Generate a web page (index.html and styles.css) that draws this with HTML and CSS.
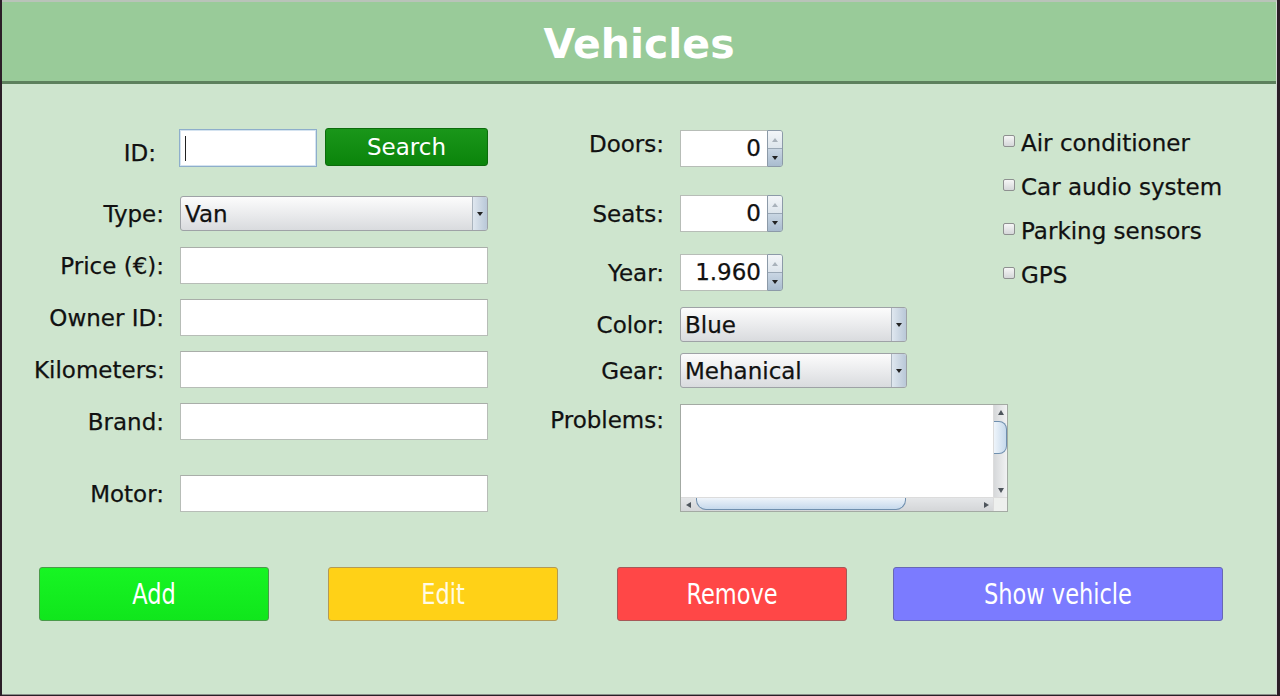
FILE: index.html
```html
<!DOCTYPE html>
<html lang="en">
<head>
<meta charset="utf-8">
<title>Vehicles</title>
<link rel="stylesheet" href="styles.css">
</head>
<body>
<div class="window">
  <header class="titlebar"><h1>Vehicles</h1></header>
  <main class="content">
    <div class="form">
      <div class="col-left">
        <div class="row row-id">
          <span class="lbl lbl-id">ID:</span>
          <div class="id-field">
            <div class="input input-focus"><span class="caret"></span></div>
            <button class="search">Search</button>
          </div>
        </div>
        <div class="row row-type">
          <span class="lbl">Type:</span>
          <div class="combo"><span class="combo-text">Van</span><span class="combo-btn"><i class="tri-down"></i></span></div>
        </div>
        <div class="row row-gap16">
          <span class="lbl">Price (€):</span>
          <div class="input"></div>
        </div>
        <div class="row row-gap15">
          <span class="lbl">Owner ID:</span>
          <div class="input"></div>
        </div>
        <div class="row row-gap15">
          <span class="lbl">Kilometers:</span>
          <div class="input"></div>
        </div>
        <div class="row row-gap15">
          <span class="lbl">Brand:</span>
          <div class="input"></div>
        </div>
        <div class="row row-motor">
          <span class="lbl">Motor:</span>
          <div class="input"></div>
        </div>
      </div>

      <div class="col-mid">
        <div class="mrow mrow-doors">
          <span class="lbl lbl-doors">Doors:</span>
          <div class="spinner"><span class="spin-val">0</span><span class="spin-btns"><span class="spin-up"><i class="tri-up-light"></i></span><span class="spin-down"><i class="tri-down"></i></span></span></div>
        </div>
        <div class="mrow mrow-seats">
          <span class="lbl">Seats:</span>
          <div class="spinner"><span class="spin-val">0</span><span class="spin-btns"><span class="spin-up"><i class="tri-up-light"></i></span><span class="spin-down"><i class="tri-down"></i></span></span></div>
        </div>
        <div class="mrow mrow-year">
          <span class="lbl">Year:</span>
          <div class="spinner"><span class="spin-val">1.960</span><span class="spin-btns"><span class="spin-up"><i class="tri-up-light"></i></span><span class="spin-down"><i class="tri-down"></i></span></span></div>
        </div>
        <div class="mrow mrow-color">
          <span class="lbl">Color:</span>
          <div class="combo combo-mid"><span class="combo-text">Blue</span><span class="combo-btn"><i class="tri-down"></i></span></div>
        </div>
        <div class="mrow mrow-gear">
          <span class="lbl">Gear:</span>
          <div class="combo combo-mid"><span class="combo-text">Mehanical</span><span class="combo-btn"><i class="tri-down"></i></span></div>
        </div>
        <div class="mrow mrow-problems">
          <span class="lbl lbl-problems">Problems:</span>
          <div class="textbox">
            <div class="ta-area"></div>
            <div class="vscroll">
              <span class="sb-arrow"><i class="tri-up"></i></span>
              <span class="vtrack"><span class="vthumb"></span></span>
              <span class="sb-arrow"><i class="tri-down-s"></i></span>
            </div>
            <div class="hscroll">
              <span class="sb-arrow sb-arrow-h"><i class="tri-left"></i></span>
              <span class="htrack"><span class="hthumb"></span></span>
              <span class="sb-arrow sb-arrow-h"><i class="tri-right"></i></span>
            </div>
            <div class="corner"></div>
          </div>
        </div>
      </div>

      <div class="col-right">
        <label class="check"><span class="box"></span><span class="check-text">Air conditioner</span></label>
        <label class="check"><span class="box"></span><span class="check-text">Car audio system</span></label>
        <label class="check"><span class="box"></span><span class="check-text">Parking sensors</span></label>
        <label class="check"><span class="box"></span><span class="check-text">GPS</span></label>
      </div>
    </div>

    <div class="actions">
      <button class="act act-add"><span class="act-label">Add</span></button>
      <button class="act act-edit"><span class="act-label">Edit</span></button>
      <button class="act act-remove"><span class="act-label">Remove</span></button>
      <button class="act act-show"><span class="act-label">Show vehicle</span></button>
    </div>
  </main>
</div>
</body>
</html>
```
FILE: styles.css
```css
* { box-sizing: border-box; }
html, body { margin: 0; height: 100%; }
body {
  background: #2b1e27;
  font-family: "DejaVu Sans", "Noto Sans", sans-serif;
  overflow: hidden;
}
.window {
  margin-left: 2px;
  width: 1275px;
  height: 695px;
  background: #cee5ce;
  border-top: 2px solid #b9c3b9;
  border-right: 1px solid #d3dad3;
  border-bottom: 1px solid #8a8f8a;
  display: flex;
  flex-direction: column;
}
.titlebar {
  height: 82px;
  background: #99cb99;
  border-bottom: 3px solid #5d805d;
  display: flex;
  align-items: center;
  justify-content: center;
  padding-top: 5px;
}
.titlebar h1 {
  margin: 0;
  font-family: "DejaVu Sans", sans-serif;
  font-weight: bold;
  font-size: 41px;
  color: #ffffff;
}
.content { flex: 1; }
.form { display: flex; }

.lbl {
  text-align: right;
  font-size: 23px;
  color: #111111;
  white-space: nowrap;
  -webkit-text-stroke: 0.25px #111111;
}

/* left column */
.col-left { margin-left: 32px; padding-top: 45px; width: 454px; }
.row {
  display: grid;
  grid-template-columns: 130px 308px;
  column-gap: 16px;
  align-items: center;
}
.row-type { margin-top: 29px; }
.row-gap16 { margin-top: 16px; }
.row-gap15 { margin-top: 15px; }
.row-motor { margin-top: 35px; }
.lbl-id { padding-right: 8px; padding-top: 10px; }

.input {
  height: 37px;
  background: #ffffff;
  border: 1px solid #b7bdb7;
  border-top-color: #a9aea9;
}
.input-focus {
  width: 138px;
  height: 38px;
  margin-left: -1px;
  border: 1px solid #8eaecb;
  box-shadow: inset 0 0 0 1px #d4e3f0;
  position: relative;
}
.caret {
  position: absolute;
  left: 5px;
  top: 6px;
  width: 1px;
  height: 25px;
  background: #222;
}
.id-field { display: flex; align-items: center; gap: 8px; }
.search {
  width: 163px;
  height: 38px;
  margin-top: -2px;
  border: 1px solid #0c6c0c;
  border-radius: 3px;
  background: linear-gradient(#1a961a, #0b840b);
  color: #ffffff;
  font-family: "DejaVu Sans", sans-serif;
  font-size: 23px;
  padding: 0;
}

.combo {
  height: 35px;
  border: 1px solid #9ea2a6;
  border-radius: 3px;
  background: linear-gradient(#fcfcfc, #e9eaec 55%, #d9dbde);
  display: flex;
  align-items: center;
  overflow: hidden;
}
.combo-mid { width: 227px; }
.combo-text {
  flex: 1;
  padding-left: 4px;
  font-size: 23px;
  color: #111;
  -webkit-text-stroke: 0.25px #111111;
}
.combo-btn {
  width: 15px;
  align-self: stretch;
  border-left: 1px solid #aab4be;
  background: linear-gradient(90deg, #dfe7ef, #b9c8d8);
  display: flex;
  align-items: center;
  justify-content: center;
}
.tri-down {
  width: 0; height: 0;
  border-left: 3px solid transparent;
  border-right: 3px solid transparent;
  border-top: 4px solid #222;
}
.tri-up-light {
  width: 0; height: 0;
  border-left: 3px solid transparent;
  border-right: 3px solid transparent;
  border-bottom: 4px solid #a9b2bb;
}

/* middle column */
.col-mid { margin-left: 52px; padding-top: 46px; width: 463px; }
.mrow {
  display: grid;
  grid-template-columns: 124px 323px;
  column-gap: 16px;
  align-items: center;
}
.lbl-doors { margin-top: -10px; }
.mrow-seats { margin-top: 28px; }
.mrow-year { margin-top: 22px; }
.mrow-color { margin-top: 16px; }
.mrow-gear { margin-top: 11px; }
.mrow-problems { margin-top: 16px; align-items: start; }
.lbl-problems { padding-top: 3px; }

.spinner {
  width: 103px;
  height: 37px;
  display: flex;
}
.spin-val {
  width: 87px;
  background: #fff;
  border: 1px solid #b7bdb7;
  border-right: none;
  text-align: right;
  padding-right: 6px;
  font-size: 23px;
  line-height: 35px;
  color: #111;
  -webkit-text-stroke: 0.25px #111111;
}
.spin-btns {
  width: 16px;
  display: flex;
  flex-direction: column;
  border: 1px solid #8c9aa8;
  border-radius: 0 3px 3px 0;
  overflow: hidden;
}
.spin-up, .spin-down {
  flex: 1;
  display: flex;
  align-items: center;
  justify-content: center;
}
.spin-up { background: linear-gradient(#f2f5f8, #dde5ec); border-bottom: 1px solid #9aa8b6; }
.spin-down { background: linear-gradient(#c9d6e3, #a9bccf); }

.textbox {
  width: 328px;
  height: 108px;
  border: 1px solid #a3aaa3;
  background: #fff;
  display: grid;
  grid-template-columns: 1fr 14px;
  grid-template-rows: 1fr 14px;
}
.ta-area { background: #fff; }
.vscroll {
  display: flex;
  flex-direction: column;
  background: linear-gradient(90deg, #d6d8da, #f1f2f3);
  border-left: 1px solid #dcdcdc;
}
.sb-arrow {
  height: 14px;
  display: flex;
  align-items: center;
  justify-content: center;
  flex: none;
}
.sb-arrow-h { width: 14px; height: auto; }
.vtrack { flex: 1; position: relative; }
.vthumb {
  position: absolute;
  left: 0;
  top: 2px;
  width: 13px;
  height: 33px;
  border: 1px solid #6f8fae;
  border-left: none;
  border-radius: 0 8px 8px 0;
  background: linear-gradient(90deg, #eef4fa, #c6d9ec);
}
.hscroll {
  display: flex;
  background: linear-gradient(#e4e6e8, #d4d6d8);
  border-top: 1px solid #dcdcdc;
}
.htrack { flex: 1; position: relative; }
.hthumb {
  position: absolute;
  left: 1px;
  top: 0;
  width: 210px;
  height: 12px;
  border: 1px solid #6f8fae;
  border-top: none;
  border-radius: 0 0 10px 10px;
  background: linear-gradient(#eef4fa, #c6d9ec);
}
.corner { background: #eef0ee; border-left: 1px solid #dcdcdc; border-top: 1px solid #dcdcdc; }
.tri-up {
  width: 0; height: 0;
  border-left: 3px solid transparent;
  border-right: 3px solid transparent;
  border-bottom: 5px solid #4e555c;
}
.tri-down-s {
  width: 0; height: 0;
  border-left: 3px solid transparent;
  border-right: 3px solid transparent;
  border-top: 5px solid #4e555c;
}
.tri-left {
  width: 0; height: 0;
  border-top: 3px solid transparent;
  border-bottom: 3px solid transparent;
  border-right: 5px solid #4e555c;
}
.tri-right {
  width: 0; height: 0;
  border-top: 3px solid transparent;
  border-bottom: 3px solid transparent;
  border-left: 5px solid #4e555c;
}

/* right column */
.col-right { padding-top: 37px; }
.check {
  display: flex;
  align-items: center;
  height: 44px;
  gap: 6px;
}
.box {
  width: 12px;
  height: 12px;
  margin-top: -4px;
  border: 1px solid #8e9090;
  border-radius: 2px;
  background: linear-gradient(#f6f6f6, #d5d7d9);
}
.check-text {
  font-size: 23px;
  color: #111111;
  white-space: nowrap;
  -webkit-text-stroke: 0.25px #111111;
}

/* bottom actions */
.actions {
  display: flex;
  padding-left: 37px;
  margin-top: 55px;
}
.act {
  width: 230px;
  height: 54px;
  border-radius: 3px;
  color: #ffffff;
  font-family: "DejaVu Sans Condensed", "DejaVu Sans", sans-serif;
  font-size: 25px;
  padding: 0;
}
.act-label { display: inline-block; transform: scaleY(1.12); }
.act-add {
  background: linear-gradient(#17f523, #10e61c);
  border: 1px solid #4a9a4a;
}
.act-edit {
  margin-left: 59px;
  background: #ffd117;
  border: 1px solid #b39a55;
  color: #fffbe6;
}
.act-remove {
  margin-left: 59px;
  background: #ff4747;
  border: 1px solid #a65858;
}
.act-show {
  margin-left: 46px;
  width: 330px;
  background: #7b7bff;
  border: 1px solid #6767b5;
}
```
